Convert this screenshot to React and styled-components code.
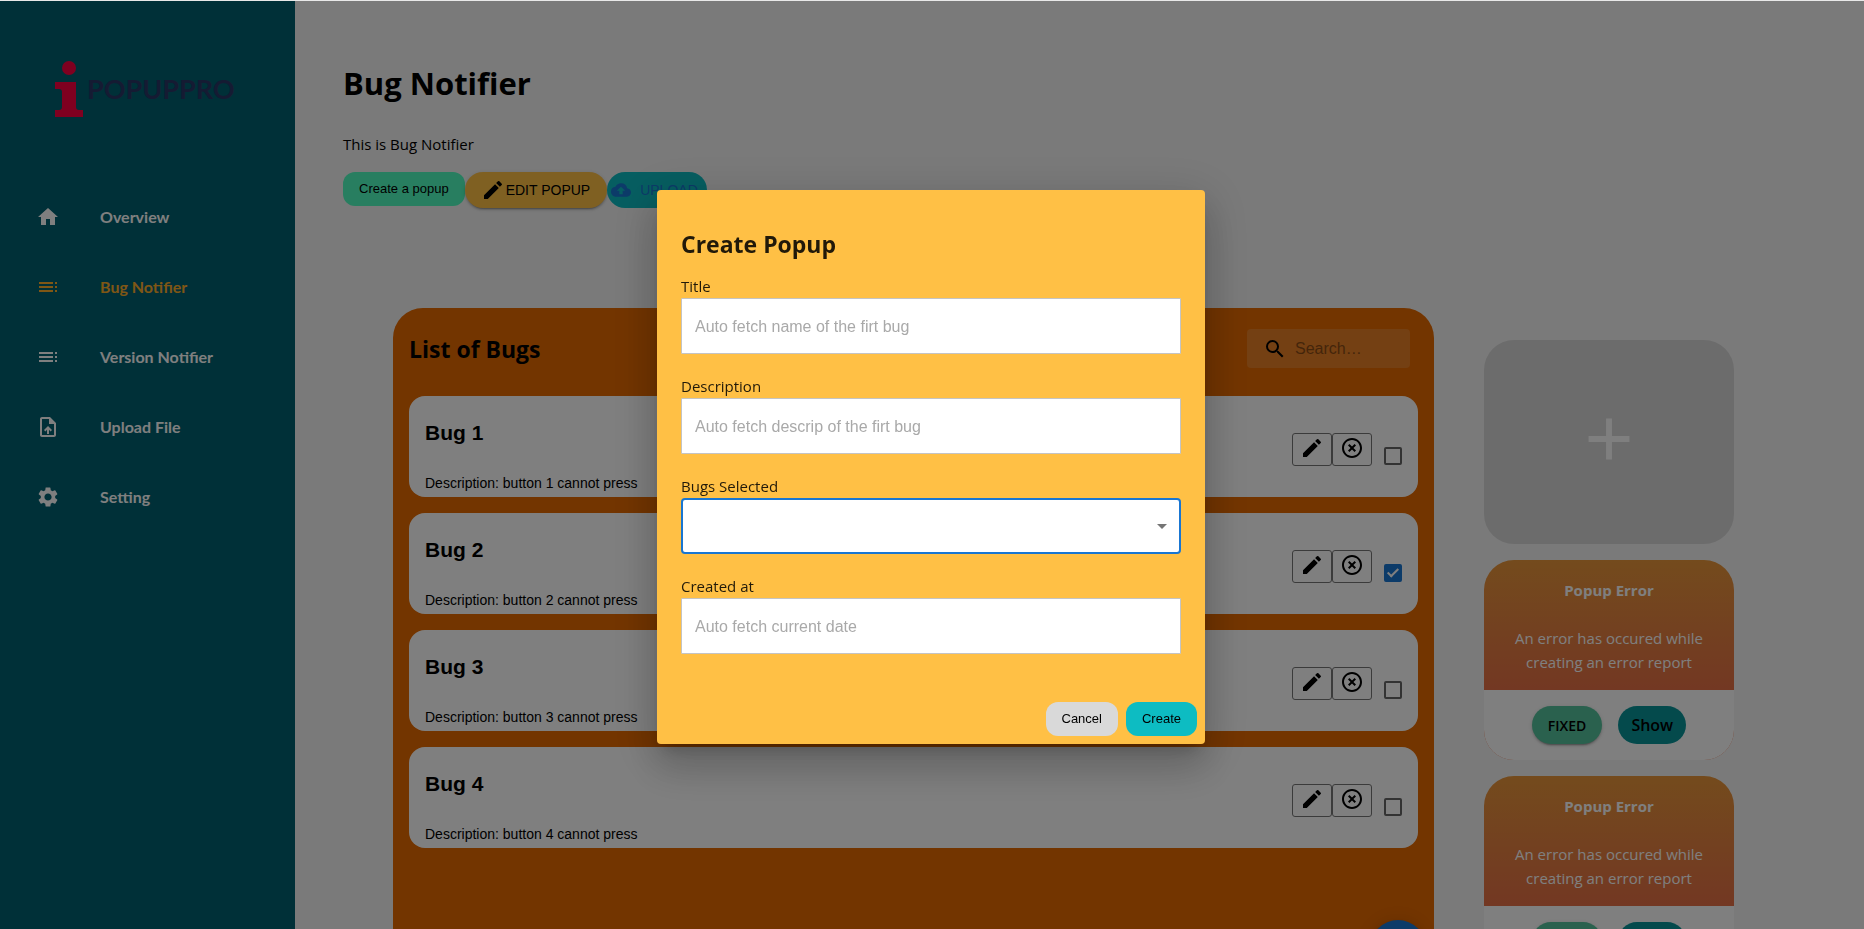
import React from "react";
import styled, { createGlobalStyle, css } from "styled-components";
import {
  MdAdd,
  MdArrowDropDown,
  MdCloudUpload,
  MdEdit,
  MdHighlightOff,
  MdHome,
  MdOutlineUploadFile,
  MdSearch,
  MdSettings,
  MdToc,
} from "react-icons/md";

const ui = `"Open Sans", "Noto Sans", sans-serif`;
const plain = `"Liberation Sans", Arial, sans-serif`;

const GlobalStyle = createGlobalStyle`
  *, *::before, *::after { box-sizing: border-box; }
  body {
    margin: 0;
    overflow: hidden;
    background: #f5f5f5;
    color: #000;
    font: 15px/24px ${ui};
  }
  h1, h2, h3, p { margin: 0; }
  button { border: 0; padding: 0; color: inherit; cursor: pointer; }
  svg { flex: none; }
`;

const Page = styled.div`
  display: flex;
  min-height: 100vh;
  border-top: 1px solid #e8e8e8;
`;

const Sidebar = styled.aside`
  flex: none;
  width: 295px;
  background: #006070;
`;

const Logo = styled.a`
  display: flex;
  gap: 4px;
  height: 181px;
  padding: 60px 0 0 55px;
  color: #2a3666;
  font: 700 27px/56px Lato, sans-serif;
  text-decoration: none;
`;

const NavItem = styled.a`
  display: flex;
  align-items: center;
  gap: 40px;
  height: 70px;
  padding-left: 36px;
  color: ${(p) => (p.$active ? "#ffae2b" : "#fff")};
  font: 700 16px/24px Lato, sans-serif;
  text-decoration: none;
`;

const Main = styled.main`
  flex: 1;
  min-width: 0;
  padding: 62px 130px 40px 48px;
`;

const PageTitle = styled.h1`
  margin-bottom: 31px;
  font-size: 31px;
  line-height: 40px;
`;

const Intro = styled.p`
  margin-bottom: 18px;
  line-height: 20px;
`;

const Toolbar = styled.div`
  display: flex;
  align-items: flex-start;
  height: 36px;
`;

const SmallButton = styled.button`
  height: 34px;
  padding: 0 16px;
  border-radius: 12px;
  background: ${(p) => p.$bg};
  font: 13px/16px ${plain};
`;

const ToolbarButton = styled.button`
  display: flex;
  align-items: center;
  height: 36px;
  border-radius: 18px;
  font: 14px/20px ${plain};
`;

const EditButton = styled(ToolbarButton)`
  gap: 1px;
  padding: 0 17px 0 16px;
  background: #ffc045;
  box-shadow: 0 3px 1px -2px rgba(0, 0, 0, 0.2), 0 2px 2px rgba(0, 0, 0, 0.14),
    0 1px 5px rgba(0, 0, 0, 0.12);
`;

const UploadButton = styled(ToolbarButton)`
  gap: 9px;
  padding: 0 9px 0 4px;
  background: #0dbcc2;
  color: #1976d2;
`;

const Columns = styled.div`
  display: grid;
  grid-template-columns: minmax(0, 1fr) 250px;
  gap: 50px;
  margin: 100px 0 0 50px;
`;

const Panel = styled.section`
  display: flex;
  flex-direction: column;
  padding: 21px 16px 16px;
  border-radius: 30px;
  background: #e66a00;
`;

const PanelHeader = styled.header`
  display: flex;
  align-items: center;
  justify-content: space-between;
  margin-bottom: 28px;
  padding-right: 8px;
`;

const PanelTitle = styled.h2`
  font-size: 23px;
  line-height: 32px;
`;

const SearchBox = styled.label`
  display: flex;
  align-items: center;
  gap: 8px;
  width: 163px;
  height: 39px;
  padding: 0 16px;
  border-radius: 4px;
  background: rgba(255, 255, 255, 0.15);

  input {
    flex: 1;
    min-width: 0;
    padding: 0;
    border: 0;
    outline: 0;
    background: none;
    font: 16px/24px ${plain};
  }
  input::placeholder { color: #000; opacity: 0.42; }
`;

const BugList = styled.ul`
  display: grid;
  gap: 16px;
  margin: 0;
  padding: 0;
  list-style: none;
`;

const BugCard = styled.li`
  display: flex;
  justify-content: space-between;
  align-items: flex-start;
  padding: 21px 16px 4px;
  border-radius: 16px;
  background: #fff;
  font: 14px/20px ${plain};
`;

const BugName = styled.h3`
  margin-bottom: 24px;
  font-size: 21px;
  line-height: 32px;
`;

const BugActions = styled.div`
  display: flex;
  align-items: flex-start;
  padding-top: 16px;
`;

const IconButton = styled.button`
  display: grid;
  place-items: center;
  width: 40px;
  height: 33px;
  padding-bottom: 3px;
  border: 1px solid #767676;
  border-radius: 3px;
  background: none;
`;

const Checkbox = styled.input.attrs({ type: "checkbox" })`
  appearance: none;
  position: relative;
  width: 18px;
  height: 18px;
  margin: 14px 0 0 12px;
  border: 2px solid #666;
  border-radius: 2px;

  &:checked {
    border-color: #1976d2;
    background: #1976d2;
  }
  &:checked::after {
    content: "";
    position: absolute;
    top: 0;
    left: 4px;
    width: 6px;
    height: 11px;
    border: solid #fff;
    border-width: 0 2px 2px 0;
    transform: rotate(45deg);
  }
`;

const Fab = styled.button`
  display: grid;
  place-items: center;
  align-self: flex-end;
  width: 56px;
  height: 56px;
  margin: 72px -8px 0 0;
  border-radius: 50%;
  background: #1976d2;
  color: #fff;
  box-shadow: 0 3px 5px -1px rgba(0, 0, 0, 0.2), 0 6px 10px rgba(0, 0, 0, 0.14),
    0 1px 18px rgba(0, 0, 0, 0.12);
`;

const PopupColumn = styled.div`
  display: flex;
  flex-direction: column;
  gap: 16px;
  padding-top: 32px;
`;

const AddPopup = styled.button`
  display: grid;
  place-items: center;
  height: 204px;
  padding-bottom: 6px;
  border-radius: 30px;
  background: #d9d9d9;
  color: #fff;
`;

const PopupCard = styled.article`
  border-radius: 30px;
  background: linear-gradient(#e8963a, #e67046 130px);
  color: #fff;
  text-align: center;
`;

const PopupBody = styled.div`
  height: 130px;
  padding: 18px 20px 0;

  h3 {
    margin-bottom: 24px;
    font-size: 15px;
    line-height: 24px;
  }
`;

const PopupFooter = styled.footer`
  display: flex;
  justify-content: center;
  gap: 16px;
  padding: 16px;
  border-radius: 0 0 30px 30px;
  background: #fff;
  color: #000;
`;

const pill = css`
  height: 38px;
  border-radius: 19px;
  font-family: ${ui};
  font-weight: 600;
`;

const FixedButton = styled.button`
  ${pill}
  padding: 0 16px;
  background: #54c29c;
  font-size: 14px;
  box-shadow: 0 3px 1px -2px rgba(0, 0, 0, 0.2), 0 2px 2px rgba(0, 0, 0, 0.14),
    0 1px 5px rgba(0, 0, 0, 0.12);
`;

const ShowButton = styled.button`
  ${pill}
  padding: 0 13px;
  background: #089499;
  font-size: 16px;
`;

const Backdrop = styled.div`
  position: fixed;
  inset: 1px 0 0;
  display: grid;
  place-items: center;
  padding: 3px 2px 0 0;
  background: rgba(0, 0, 0, 0.5);
`;

const Dialog = styled.form`
  width: 548px;
  max-width: calc(100% - 64px);
  border-radius: 4px;
  background: #ffc045;
  color: rgba(0, 0, 0, 0.87);
  box-shadow: 0 11px 15px -7px rgba(0, 0, 0, 0.2),
    0 24px 38px 3px rgba(0, 0, 0, 0.14), 0 9px 46px 8px rgba(0, 0, 0, 0.12);
`;

const DialogBody = styled.div`
  display: grid;
  gap: 20px;
  padding: 38px 24px 48px;
`;

const DialogTitle = styled.h2`
  margin-bottom: -6px;
  font-size: 23px;
  line-height: 32px;
`;

const Field = styled.div`
  display: grid;
`;

const control = css`
  width: 100%;
  height: 56px;
  padding: 2px 13px 0;
  outline: 0;
  background: #fff;
  font: 16px/24px ${plain};
`;

const TextInput = styled.input`
  ${control}
  border: 1px solid #c4c4c4;
  border-radius: 1px;

  &::placeholder { color: #a9a9a9; opacity: 1; }
`;

const SelectWrap = styled.div`
  position: relative;

  svg {
    position: absolute;
    top: 16px;
    right: 7px;
    color: #757575;
    pointer-events: none;
  }
`;

const Select = styled.select`
  ${control}
  display: block;
  appearance: none;
  border: 2px solid #1976d2;
  border-radius: 4px;
`;

const DialogActions = styled.div`
  display: flex;
  justify-content: flex-end;
  gap: 8px;
  padding: 0 8px 8px;
  color: #000;
`;

const navItems = [
  { label: "Overview", Icon: MdHome },
  { label: "Bug Notifier", Icon: MdToc, active: true },
  { label: "Version Notifier", Icon: MdToc },
  { label: "Upload File", Icon: MdOutlineUploadFile },
  { label: "Setting", Icon: MdSettings },
];

const bugs = [
  { id: 1, checked: false },
  { id: 2, checked: true },
  { id: 3, checked: false },
  { id: 4, checked: false },
];

function TextField({ id, label, placeholder }) {
  return (
    <Field>
      <label htmlFor={id}>{label}</label>
      <TextInput id={id} placeholder={placeholder} />
    </Field>
  );
}

function CreatePopupDialog() {
  return (
    <Backdrop>
      <Dialog role="dialog" aria-modal="true" aria-labelledby="dialog-title">
        <DialogBody>
          <DialogTitle id="dialog-title">Create Popup</DialogTitle>
          <TextField id="title" label="Title" placeholder="Auto fetch name of the firt bug" />
          <TextField
            id="description"
            label="Description"
            placeholder="Auto fetch descrip of the firt bug"
          />
          <Field>
            <label htmlFor="selected">Bugs Selected</label>
            <SelectWrap>
              <Select id="selected" defaultValue="">
                <option value="" />
              </Select>
              <MdArrowDropDown size={24} />
            </SelectWrap>
          </Field>
          <TextField id="created" label="Created at" placeholder="Auto fetch current date" />
        </DialogBody>
        <DialogActions>
          <SmallButton type="button" $bg="#d9d9d9">Cancel</SmallButton>
          <SmallButton type="button" $bg="#0dbcc2">Create</SmallButton>
        </DialogActions>
      </Dialog>
    </Backdrop>
  );
}

function Popup() {
  return (
    <PopupCard>
      <PopupBody>
        <h3>Popup Error</h3>
        <p>An error has occured while creating an error report</p>
      </PopupBody>
      <PopupFooter>
        <FixedButton>FIXED</FixedButton>
        <ShowButton>Show</ShowButton>
      </PopupFooter>
    </PopupCard>
  );
}

export default function App() {
  return (
    <>
      <GlobalStyle />
      <Page>
        <Sidebar>
          <Logo href="#">
            <svg width="28" height="56" viewBox="0 0 28 56" fill="#ff0040" aria-hidden="true">
              <circle cx="14" cy="7" r="7" />
              <path d="M0 21h21v25q0 3 3 3h4v7H0v-7h4q3 0 3-3V31q0-3-3-3H0z" />
            </svg>
            POPUPPRO
          </Logo>
          <nav>
            {navItems.map(({ label, Icon, active }) => (
              <NavItem key={label} href="#" $active={active}>
                <Icon size={24} />
                {label}
              </NavItem>
            ))}
          </nav>
        </Sidebar>
        <Main>
          <PageTitle>Bug Notifier</PageTitle>
          <Intro>This is Bug Notifier</Intro>
          <Toolbar>
            <SmallButton $bg="#50fcc0">Create a popup</SmallButton>
            <EditButton>
              <MdEdit size={24} />
              EDIT POPUP
            </EditButton>
            <UploadButton>
              <MdCloudUpload size={20} />
              UPLOAD
            </UploadButton>
          </Toolbar>
          <Columns>
            <Panel>
              <PanelHeader>
                <PanelTitle>List of Bugs</PanelTitle>
                <SearchBox>
                  <MdSearch size={24} />
                  <input type="text" placeholder="Search…" aria-label="Search" />
                </SearchBox>
              </PanelHeader>
              <BugList>
                {bugs.map(({ id, checked }) => (
                  <BugCard key={id}>
                    <div>
                      <BugName>Bug {id}</BugName>
                      <p>Description: button {id} cannot press</p>
                    </div>
                    <BugActions>
                      <IconButton aria-label="Edit"><MdEdit size={24} /></IconButton>
                      <IconButton aria-label="Delete"><MdHighlightOff size={24} /></IconButton>
                      <Checkbox defaultChecked={checked} aria-label={`Select bug ${id}`} />
                    </BugActions>
                  </BugCard>
                ))}
              </BugList>
              <Fab aria-label="Add bug"><MdAdd size={24} /></Fab>
            </Panel>
            <PopupColumn>
              <AddPopup aria-label="Add popup"><MdAdd size={70} /></AddPopup>
              <Popup />
              <Popup />
            </PopupColumn>
          </Columns>
        </Main>
      </Page>
      <CreatePopupDialog />
    </>
  );
}
